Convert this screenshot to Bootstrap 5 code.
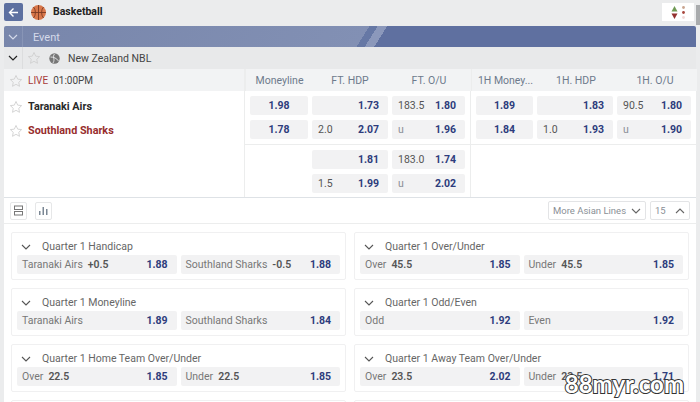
<!DOCTYPE html>
<html lang="en">
<head>
    <meta charset="UTF-8">
    <meta name="viewport" content="width=device-width, initial-scale=1.0">
    <title>Basketball</title>
    <link href="https://cdn.jsdelivr.net/npm/bootstrap@5.3.0/dist/css/bootstrap.min.css" rel="stylesheet">
    <style>
        html, body {
            height: 402px;
            overflow: hidden;
        }
        body {
            background-color: #ebeced;
            font-family: Roboto, "Noto Sans", sans-serif;
            font-size: 10.5px;
            line-height: 1.2;
            color: #666;
            padding: 0 4px;
            white-space: nowrap;
        }
        .scroll-thumb {
            position: absolute;
            top: 5px;
            right: 0;
            width: 4px;
            height: 20px;
            background-color: #a9abad;
        }
        .top-bar {
            height: 26px;
            padding-bottom: 2px;
        }
        .back-btn {
            width: 19px;
            height: 18px;
            background-color: #5d70a0;
            border-radius: 2px;
        }
        .top-title {
            font-size: 10.5px;
            font-weight: 700;
            color: #222;
            margin-left: 7px;
        }
        .filter-btn {
            width: 32px;
            height: 18px;
            margin-right: 2px;
            background-color: #fff;
        }
        .event-bar {
            height: 21px;
            color: #d5daea;
            font-size: 11px;
            border-radius: 2px 2px 0 0;
            background: linear-gradient(122deg, #7886ab 0, #8290b4 310px, #6678a5 310px, #6678a5 317px, #8b98bb 317px, #8b98bb 325px, #5f70a0 325px);
        }
        .event-label {
            padding: 2px 0 0 10px;
        }
        .bar-toggle {
            width: 19px;
            border-right: 1px solid #8895b6;
        }
        .league-bar {
            height: 22px;
            background-color: #e8e9ea;
            color: #444;
            font-size: 10.5px;
        }
        .league-name {
            margin-left: 8px;
            padding-top: 2px;
        }
        .league-toggle {
            width: 19px;
            border-right: 1px solid #dcddde;
        }
        .panel {
            background-color: #fff;
        }
        .left-col {
            width: 241px;
            flex: none;
            border-right: 1px solid #eceded;
        }
        .head-left {
            height: 22px;
            background-color: #f2f3f4;
            font-size: 10px;
            color: #444;
            padding: 2px 0 0 5px;
        }
        .live-tag {
            color: #a83a3a;
            margin: 0 5px 0 5px;
        }
        .team-col {
            padding-top: 4px;
        }
        .odds-group {
            flex: 1 1 0;
            display: grid;
            grid-template-columns: 57px 76px 74px;
            gap: 5px 4px;
            padding: 5px;
            border-left: 1px solid #eceded;
            min-height: 52px;
        }
        .odds-group:first-of-type {
            border-left: 0;
            grid-template-columns: 58px 76px 73px;
        }
        .odds-group.head-group {
            height: 22px;
            min-height: 0;
            padding-top: 2px;
            padding-bottom: 0;
            background-color: #f2f3f4;
            align-items: center;
            text-align: center;
            color: #6d7a8c;
            font-size: 10.5px;
        }
        .line-block {
            border-bottom: 1px solid #eceded;
        }
        .line-last .odds-group {
            padding-bottom: 4px;
        }
        .line-block .odds-group {
            min-height: 53px;
        }
        .team-row {
            height: 24px;
            padding-left: 5px;
            font-size: 10.8px;
            font-weight: 700;
            color: #2a2a2a;
        }
        .team-away {
            color: #982e2e;
        }
        .team-name {
            margin-left: 5px;
        }
        .odd-cell {
            height: 19px;
            background-color: #f2f2f3;
            border-radius: 2px;
            padding: 2px 9px 0 6px;
            font-size: 10.5px;
            color: #555;
        }
        .odd-val {
            color: #2d3c7c;
            font-weight: 700;
            margin-left: auto;
        }
        .odd-center {
            justify-content: center;
            padding: 2px 0 0;
        }
        .odd-center .odd-val {
            margin: 0;
        }
        .under-tag {
            color: #8a8f96;
        }
        .tool-row {
            height: 27px;
            padding: 0 6px;
            border-bottom: 1px solid #eceded;
        }
        .tool-btn {
            width: 17px;
            height: 18px;
            border: 1px solid #e6e7e8;
            border-radius: 2px;
        }
        .line-select {
            height: 19px;
            border: 1px solid #e3e4e6;
            border-radius: 2px;
            color: #8a8f96;
            font-size: 9.5px;
        }
        .select-lines {
            width: 98px;
        }
        .select-count {
            width: 40px;
        }
        .market-wrap {
            padding: 8px 7px 0;
        }
        .market-card {
            height: 48px;
            border: 1px solid #f0f0f1;
            border-radius: 2px;
            padding: 0 5px;
        }
        .market-title {
            height: 22px;
            padding: 6px 0 0 4px;
            font-size: 10.5px;
            color: #666;
        }
        .market-title span {
            margin-left: 11px;
        }
        .market-cell {
            flex: 1 1 0;
            height: 19px;
            background-color: #f2f2f3;
            border-radius: 2px;
            padding: 2px 9px 0 5px;
            font-size: 10.5px;
            color: #777;
        }
        .market-point {
            color: #555;
            font-weight: 600;
            margin-left: 5px;
        }
        .stamp {
            position: absolute;
            right: 16px;
            bottom: 6px;
            font-family: "Lato", sans-serif;
            font-size: 24px;
            line-height: 1;
            font-weight: 700;
            color: #fff;
            -webkit-text-stroke: 2px #333;
            paint-order: stroke fill;
        }
    </style>
</head>
<body>
    <div class="scroll-thumb"></div>

    <!-- Sport header -->
    <div class="top-bar d-flex align-items-center">
        <div class="back-btn d-flex align-items-center justify-content-center">
            <svg width="11" height="11" viewBox="0 0 11 11" fill="none" stroke="#fff" stroke-width="1.4"><path d="M10 5.5H1.5M5.5 1.5l-4 4 4 4"/></svg>
        </div>
        <svg class="ms-2" width="15" height="15" viewBox="0 0 15 15" fill="none"><circle cx="7.5" cy="7.5" r="7.5" fill="#d9774a"/><path d="M7.5 0v15M0 7.5h15M2.4 2C5 4.5 5 10.500 2.400 13M12.600 2C10 4.500 10 10.500 12.600 13" stroke="#7a3a22" stroke-width=".9"/></svg>
        <div class="top-title">Basketball</div>
        <div class="filter-btn ms-auto d-flex align-items-center justify-content-center gap-1">
            <svg width="7" height="13" viewBox="0 0 7 13"><path d="M3.500 0L6.500 5.500H.5z" fill="#6f9a55"/><path d="M.5 7.500h6L3.500 13z" fill="#93302f"/></svg>
            <svg width="3" height="13" viewBox="0 0 3 13"><circle cx="1.500" cy="1.500" r="1.400" fill="#c9a48f"/><circle cx="1.500" cy="6.500" r="1.400" fill="#a8453c"/><circle cx="1.500" cy="11.500" r="1.400" fill="#f0d8d8"/></svg>
        </div>
    </div>

    <!-- Event bar -->
    <div class="event-bar d-flex align-items-stretch">
        <div class="bar-toggle d-flex align-items-center justify-content-center">
            <svg width="10" height="6" viewBox="0 0 10 6" fill="none" stroke="#d5daea" stroke-width="1.200"><path d="M1 1l4 4 4-4"/></svg>
        </div>
        <div class="event-label d-flex align-items-center">Event</div>
    </div>

    <!-- League -->
    <div class="league-bar d-flex align-items-stretch">
        <div class="league-toggle d-flex align-items-center justify-content-center">
            <svg width="10" height="6" viewBox="0 0 10 6" fill="none" stroke="#222" stroke-width="1.200"><path d="M1 1l4 4 4-4"/></svg>
        </div>
        <div class="d-flex align-items-center ps-1">
            <svg width="14" height="14" viewBox="0 0 24 24" fill="none" stroke="#cfcfcf" stroke-width="1.500"><path d="M12 2.500l2.900 6.300 6.800.8-5 4.700 1.300 6.800-6-3.400-6 3.400 1.300-6.800-5-4.700 6.800-.8z"/></svg>
            <svg class="ms-2" width="11" height="11" viewBox="0 0 11 11"><circle cx="5.500" cy="5.500" r="5.200" fill="#777"/><path d="M5.500 1C3 4 6.500 6 4 10M1.500 4c3 0 6 1 8 4" stroke="#e8e9ea" stroke-width=".9" fill="none"/></svg>
            <span class="league-name">New Zealand NBL</span>
        </div>
    </div>

    <div class="panel">
        <!-- Column heads -->
        <div class="d-flex">
            <div class="left-col head-left d-flex align-items-center">
                <svg width="14" height="14" viewBox="0 0 24 24" fill="none" stroke="#cfcfcf" stroke-width="1.500"><path d="M12 2.500l2.900 6.300 6.800.8-5 4.700 1.300 6.800-6-3.400-6 3.400 1.300-6.800-5-4.700 6.800-.8z"/></svg>
                <span class="live-tag">LIVE</span><span>01:00PM</span>
            </div>
            <div class="odds-group head-group"><div>Moneyline</div><div>FT. HDP</div><div>FT. O/U</div></div>
            <div class="odds-group head-group"><div>1H Money...</div><div>1H. HDP</div><div>1H. O/U</div></div>
        </div>

        <!-- Main lines -->
        <div class="d-flex">
            <div class="left-col team-col">
                <div class="team-row d-flex align-items-center">
                    <svg width="14" height="14" viewBox="0 0 24 24" fill="none" stroke="#cfcfcf" stroke-width="1.500"><path d="M12 2.500l2.900 6.300 6.800.8-5 4.700 1.300 6.800-6-3.400-6 3.400 1.300-6.800-5-4.700 6.800-.8z"/></svg>
                    <span class="team-name">Taranaki Airs</span>
                </div>
                <div class="team-row team-away d-flex align-items-center">
                    <svg width="14" height="14" viewBox="0 0 24 24" fill="none" stroke="#cfcfcf" stroke-width="1.500"><path d="M12 2.500l2.900 6.300 6.800.8-5 4.700 1.300 6.800-6-3.400-6 3.400 1.300-6.800-5-4.700 6.800-.8z"/></svg>
                    <span class="team-name">Southland Sharks</span>
                </div>
            </div>
            <div class="flex-grow-1">
                <div class="d-flex line-block">
                    <div class="odds-group">
                        <div class="odd-cell odd-center d-flex align-items-center"><span class="odd-val">1.98</span></div>
                        <div class="odd-cell d-flex align-items-center"><span class="odd-val">1.73</span></div>
                        <div class="odd-cell d-flex align-items-center"><span>183.5</span><span class="odd-val">1.80</span></div>
                        <div class="odd-cell odd-center d-flex align-items-center"><span class="odd-val">1.78</span></div>
                        <div class="odd-cell d-flex align-items-center"><span>2.0</span><span class="odd-val">2.07</span></div>
                        <div class="odd-cell d-flex align-items-center"><span class="under-tag">u</span><span class="odd-val">1.96</span></div>
                    </div>
                    <div class="odds-group">
                        <div class="odd-cell odd-center d-flex align-items-center"><span class="odd-val">1.89</span></div>
                        <div class="odd-cell d-flex align-items-center"><span class="odd-val">1.83</span></div>
                        <div class="odd-cell d-flex align-items-center"><span>90.5</span><span class="odd-val">1.80</span></div>
                        <div class="odd-cell odd-center d-flex align-items-center"><span class="odd-val">1.84</span></div>
                        <div class="odd-cell d-flex align-items-center"><span>1.0</span><span class="odd-val">1.93</span></div>
                        <div class="odd-cell d-flex align-items-center"><span class="under-tag">u</span><span class="odd-val">1.90</span></div>
                    </div>
                </div>
                <div class="d-flex line-last">
                    <div class="odds-group">
                        <div></div>
                        <div class="odd-cell d-flex align-items-center"><span class="odd-val">1.81</span></div>
                        <div class="odd-cell d-flex align-items-center"><span>183.0</span><span class="odd-val">1.74</span></div>
                        <div></div>
                        <div class="odd-cell d-flex align-items-center"><span>1.5</span><span class="odd-val">1.99</span></div>
                        <div class="odd-cell d-flex align-items-center"><span class="under-tag">u</span><span class="odd-val">2.02</span></div>
                    </div>
                    <div class="odds-group"></div>
                </div>
            </div>
        </div>

        <!-- Tools -->
        <div class="tool-row d-flex align-items-center gap-1 border-top">
            <div class="tool-btn d-flex align-items-center justify-content-center">
                <svg width="11" height="11" viewBox="0 0 11 11" fill="none" stroke="#777"><rect x="1.500" y="1" width="8" height="3.500"/><rect x="1.500" y="6.500" width="8" height="3.500"/></svg>
            </div>
            <div class="tool-btn ms-1 d-flex align-items-center justify-content-center">
                <svg width="9" height="9" viewBox="0 0 9 9" fill="#7b8794"><rect x="0" y="5" width="1.500" height="4"/><rect x="3.500" y="1" width="1.500" height="8"/><rect x="7" y="3" width="1.500" height="6"/></svg>
            </div>
            <div class="line-select select-lines ms-auto d-flex align-items-center justify-content-between px-1">
                <span>More Asian Lines</span>
                <svg width="10" height="6" viewBox="0 0 10 6" fill="none" stroke="#666" stroke-width="1.100"><path d="M1 1l4 4 4-4"/></svg>
            </div>
            <div class="line-select select-count d-flex align-items-center justify-content-between px-1">
                <span>15</span>
                <svg width="10" height="6" viewBox="0 0 10 6" fill="none" stroke="#666" stroke-width="1.100"><path d="M1 5l4-4 4 4"/></svg>
            </div>
        </div>

        <!-- Quarter markets -->
        <div class="market-wrap">
            <div class="row g-2">
                <div class="col-6">
                    <div class="market-card">
                        <div class="market-title d-flex align-items-center"><svg width="10" height="6" viewBox="0 0 10 6" fill="none" stroke="#555" stroke-width="1.100"><path d="M1 1l4 4 4-4"/></svg><span>Quarter 1 Handicap</span></div>
                        <div class="d-flex gap-1">
                            <div class="market-cell d-flex align-items-center">Taranaki Airs<b class="market-point">+0.5</b><span class="odd-val">1.88</span></div>
                            <div class="market-cell d-flex align-items-center">Southland Sharks<b class="market-point">-0.5</b><span class="odd-val">1.88</span></div>
                        </div>
                    </div>
                </div>
                <div class="col-6">
                    <div class="market-card">
                        <div class="market-title d-flex align-items-center"><svg width="10" height="6" viewBox="0 0 10 6" fill="none" stroke="#555" stroke-width="1.100"><path d="M1 1l4 4 4-4"/></svg><span>Quarter 1 Over/Under</span></div>
                        <div class="d-flex gap-1">
                            <div class="market-cell d-flex align-items-center">Over<b class="market-point">45.5</b><span class="odd-val">1.85</span></div>
                            <div class="market-cell d-flex align-items-center">Under<b class="market-point">45.5</b><span class="odd-val">1.85</span></div>
                        </div>
                    </div>
                </div>
                <div class="col-6">
                    <div class="market-card">
                        <div class="market-title d-flex align-items-center"><svg width="10" height="6" viewBox="0 0 10 6" fill="none" stroke="#555" stroke-width="1.100"><path d="M1 1l4 4 4-4"/></svg><span>Quarter 1 Moneyline</span></div>
                        <div class="d-flex gap-1">
                            <div class="market-cell d-flex align-items-center">Taranaki Airs<span class="odd-val">1.89</span></div>
                            <div class="market-cell d-flex align-items-center">Southland Sharks<span class="odd-val">1.84</span></div>
                        </div>
                    </div>
                </div>
                <div class="col-6">
                    <div class="market-card">
                        <div class="market-title d-flex align-items-center"><svg width="10" height="6" viewBox="0 0 10 6" fill="none" stroke="#555" stroke-width="1.100"><path d="M1 1l4 4 4-4"/></svg><span>Quarter 1 Odd/Even</span></div>
                        <div class="d-flex gap-1">
                            <div class="market-cell d-flex align-items-center">Odd<span class="odd-val">1.92</span></div>
                            <div class="market-cell d-flex align-items-center">Even<span class="odd-val">1.92</span></div>
                        </div>
                    </div>
                </div>
                <div class="col-6">
                    <div class="market-card">
                        <div class="market-title d-flex align-items-center"><svg width="10" height="6" viewBox="0 0 10 6" fill="none" stroke="#555" stroke-width="1.100"><path d="M1 1l4 4 4-4"/></svg><span>Quarter 1 Home Team Over/Under</span></div>
                        <div class="d-flex gap-1">
                            <div class="market-cell d-flex align-items-center">Over<b class="market-point">22.5</b><span class="odd-val">1.85</span></div>
                            <div class="market-cell d-flex align-items-center">Under<b class="market-point">22.5</b><span class="odd-val">1.85</span></div>
                        </div>
                    </div>
                </div>
                <div class="col-6">
                    <div class="market-card">
                        <div class="market-title d-flex align-items-center"><svg width="10" height="6" viewBox="0 0 10 6" fill="none" stroke="#555" stroke-width="1.100"><path d="M1 1l4 4 4-4"/></svg><span>Quarter 1 Away Team Over/Under</span></div>
                        <div class="d-flex gap-1">
                            <div class="market-cell d-flex align-items-center">Over<b class="market-point">23.5</b><span class="odd-val">2.02</span></div>
                            <div class="market-cell d-flex align-items-center">Under<b class="market-point">23.5</b><span class="odd-val">1.71</span></div>
                        </div>
                    </div>
                </div>
                <div class="col-6"><div class="market-card"></div></div>
                <div class="col-6"><div class="market-card"></div></div>
            </div>
        </div>
    </div>

    <div class="stamp">88myr.com</div>

    <script src="https://cdn.jsdelivr.net/npm/bootstrap@5.3.0/dist/js/bootstrap.bundle.min.js"></script>
</body>
</html>
